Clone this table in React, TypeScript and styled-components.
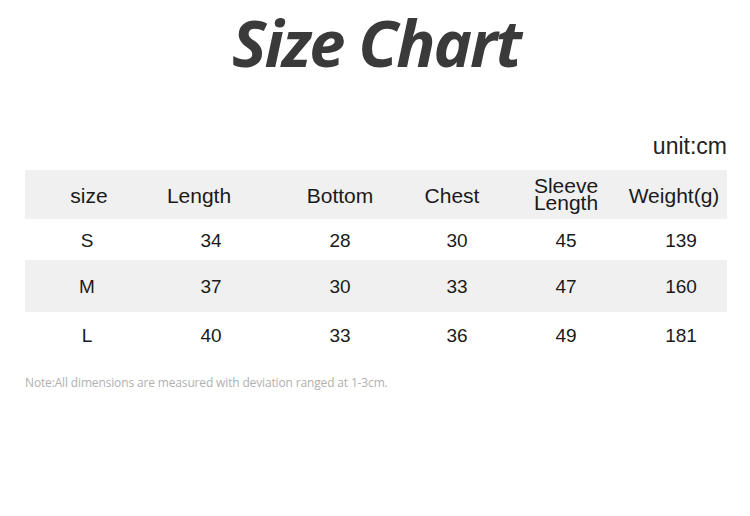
import React from "react";
import styled, { createGlobalStyle } from "styled-components";

type Col = { width: number; offset: number };

// column boxes are 110px wide; offset is the gap before each one
const headCols: Col[] = [
  { width: 110, offset: 9 },
  { width: 110, offset: 0 },
  { width: 110, offset: 31 },
  { width: 110, offset: 2 },
  { width: 110, offset: 4 },
  { width: 110, offset: -2 },
];

const bodyCols: Col[] = [
  { width: 110, offset: 7 },
  { width: 110, offset: 14 },
  { width: 110, offset: 19 },
  { width: 110, offset: 7 },
  { width: 110, offset: -1 },
  { width: 110, offset: 5 },
];

const headers = ["size", "Length", "Bottom", "Chest", "Sleeve\nLength", "Weight(g)"];

const rows = [
  { size: "S", values: ["34", "28", "30", "45", "139"], height: 41, shaded: false },
  { size: "M", values: ["37", "30", "33", "47", "160"], height: 52, shaded: true },
  { size: "L", values: ["40", "33", "36", "49", "181"], height: 45, shaded: false },
];

function App() {
  return (
    <>
      <GlobalStyle />
      <Page>
        <Title>Size Chart</Title>
        <Unit>unit:cm</Unit>
        <Table>
          <Row $height={49} $shaded>
            {headers.map((h, i) => (
              <HeadCell key={h} $width={headCols[i].width} $offset={headCols[i].offset}>
                {h.includes("\n") ? (
                  <Stacked>
                    {h.split("\n").map((line) => (
                      <span key={line}>{line}</span>
                    ))}
                  </Stacked>
                ) : (
                  h
                )}
              </HeadCell>
            ))}
          </Row>
          {rows.map((r) => (
            <Row key={r.size} $height={r.height} $shaded={r.shaded}>
              {[r.size, ...r.values].map((v, i) => (
                <BodyCell key={i} $width={bodyCols[i].width} $offset={bodyCols[i].offset}>
                  {v}
                </BodyCell>
              ))}
            </Row>
          ))}
        </Table>
        <Note>Note:All dimensions are measured with deviation ranged at 1-3cm.</Note>
      </Page>
    </>
  );
}

const GlobalStyle = createGlobalStyle`
  html, body {
    margin: 0;
    padding: 0;
    background: #ffffff;
  }
`;

const Page = styled.div`
  width: 750px;
  height: 516px;
  display: flex;
  flex-direction: column;
  background: #ffffff;
  overflow: hidden;
`;

const Title = styled.h1`
  margin: 0;
  height: 90px;
  text-align: center;
  font-family: "Open Sans", "Liberation Sans", sans-serif;
  font-weight: 700;
  font-style: italic;
  font-size: 65px;
  line-height: 84px;
  letter-spacing: -2px;
  color: #3a3a3a;
  padding-left: 2px;
`;

const Unit = styled.div`
  margin-top: 43px;
  padding-right: 23px;
  text-align: right;
  font-family: "Liberation Sans", Arial, sans-serif;
  font-size: 23px;
  line-height: 26px;
  color: #222222;
`;

const Table = styled.div`
  margin: 11px 23px 0 25px;
  display: flex;
  flex-direction: column;
`;

const Row = styled.div<{ $height: number; $shaded?: boolean }>`
  height: ${({ $height }) => $height}px;
  display: flex;
  align-items: center;
  background: ${({ $shaded }) => ($shaded ? "#f0f0f0" : "#ffffff")};
`;

const Cell = styled.div<{ $width: number; $offset: number }>`
  flex: 0 0 ${({ $width }) => $width}px;
  margin-left: ${({ $offset }) => $offset}px;
  display: flex;
  justify-content: center;
  font-family: "Liberation Sans", Arial, sans-serif;
  color: #1a1a1a;
  white-space: nowrap;
`;

const HeadCell = styled(Cell)`
  font-size: 21px;
  line-height: 24px;
  padding-top: 3px;
`;

const BodyCell = styled(Cell)`
  font-size: 19px;
  line-height: 22px;
  padding-top: 2px;
`;

const Stacked = styled.div`
  display: flex;
  flex-direction: column;
  align-items: center;
  line-height: 17px;
  margin-top: -4px;
`;

const Note = styled.div`
  margin-top: 18px;
  padding-left: 25px;
  font-family: "Open Sans", "Liberation Sans", sans-serif;
  font-size: 12px;
  line-height: 16px;
  letter-spacing: -0.15px;
  color: #b0b0b0;
`;

export default App;
